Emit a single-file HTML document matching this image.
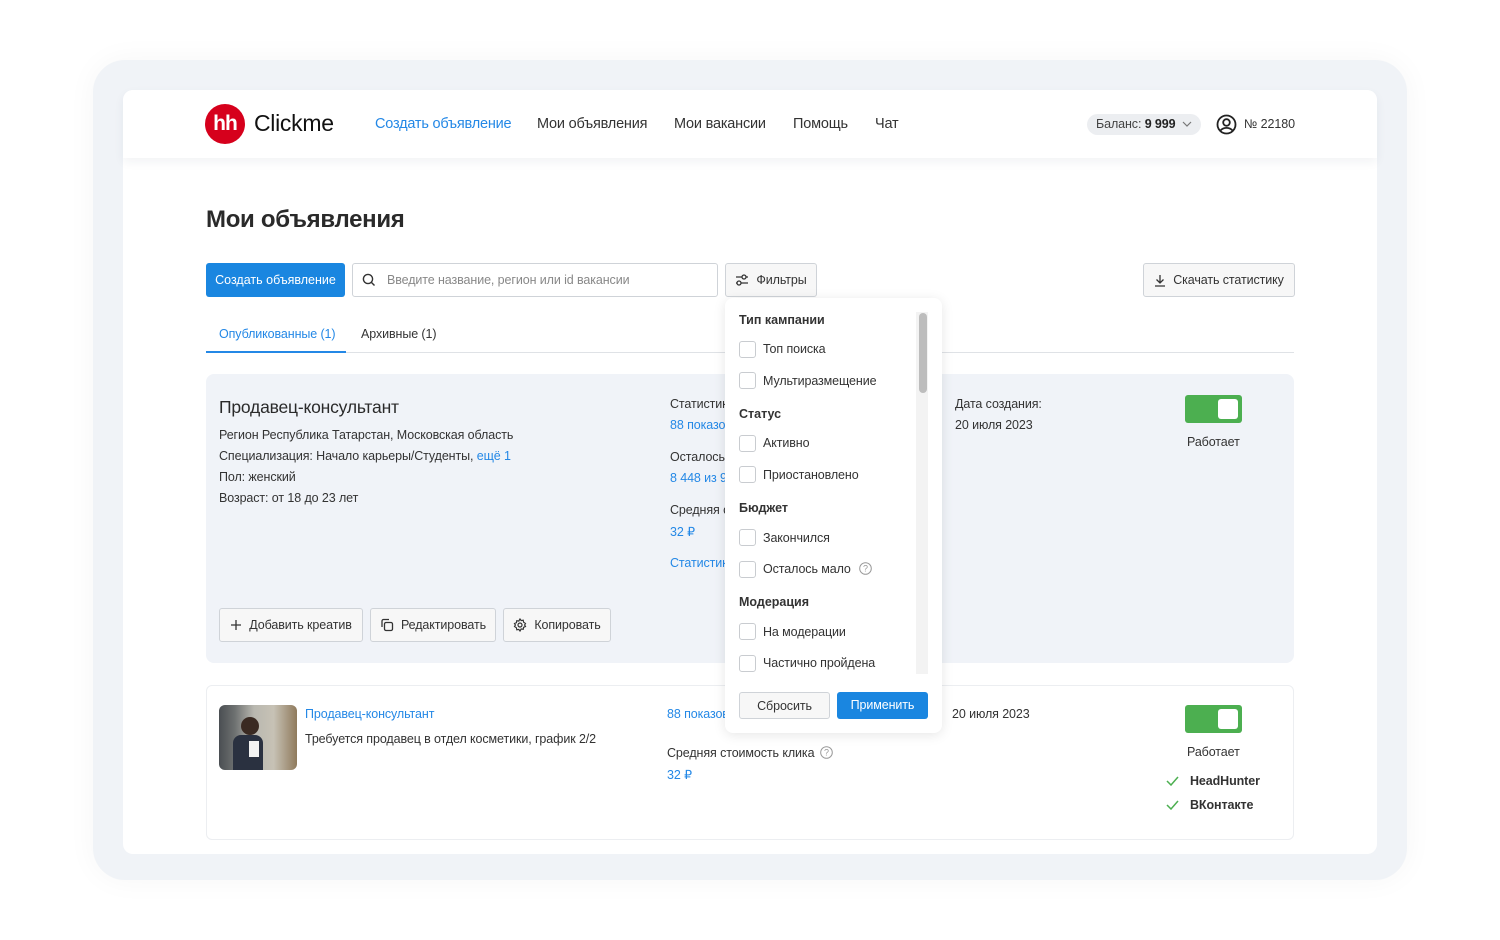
<!DOCTYPE html>
<html><head><meta charset="utf-8"><style>
*{box-sizing:border-box;margin:0;padding:0}
body{width:1500px;height:940px;background:#fff;font-family:"Liberation Sans",Arial,sans-serif;color:#333;position:relative;overflow:hidden}
.a{position:absolute;white-space:nowrap}
.frame{left:93px;top:60px;width:1314px;height:820px;background:#f0f3f7;border-radius:32px;box-shadow:0 0 30px rgba(0,0,0,0.04)}
.inner{left:123px;top:90px;width:1254px;height:764px;background:#fff;border-radius:10px;overflow:hidden}
.hdr{left:123px;top:90px;width:1254px;height:68px;background:#fff;border-radius:10px 10px 0 0;box-shadow:0 4px 10px rgba(30,50,90,0.06)}
.nav{font-size:14.5px;top:116px;letter-spacing:-0.2px}
.blue{color:#2488e6}
.btn{border:1px solid #cfd3d8;border-radius:3px;background:#f7f7f7;font-size:12.5px;display:flex;align-items:center;justify-content:center;gap:7px;letter-spacing:-0.1px}
.t13{font-size:12.5px;letter-spacing:-0.1px}
.cb{position:absolute;left:739px;width:17px;height:17px;border:1px solid #c9ccd0;border-radius:3px;background:#fff}
.lb{position:absolute;left:763px;font-size:12.5px;letter-spacing:-0.1px}
.hd{position:absolute;left:739px;font-size:12.5px;font-weight:bold}
.tg{width:57px;height:28px;background:#4caf50;border-radius:3px}
.tg:after{content:"";position:absolute;right:4px;top:4px;width:20px;height:20px;background:#fff;border-radius:3px}
</style></head><body>
<div class="a frame"></div>
<div class="a inner"></div>
<div class="a hdr"></div>
<div class="a" style="left:205px;top:104px;width:40px;height:40px;border-radius:50%;background:#d6001c;color:#fff;font-weight:bold;font-size:21px;text-align:center;line-height:40px;letter-spacing:-1px">hh</div>
<div class="a" style="left:254px;top:110px;font-size:23px;color:#111;letter-spacing:-0.3px">Clickme</div>
<div class="a nav blue" style="left:375px">Создать объявление</div>
<div class="a nav" style="left:537px">Мои объявления</div>
<div class="a nav" style="left:674px">Мои вакансии</div>
<div class="a nav" style="left:793px">Помощь</div>
<div class="a nav" style="left:875px">Чат</div>
<div class="a t13" style="left:1087px;top:114px;width:114px;height:21px;background:#eceef1;border-radius:11px;padding:3px 0 0 9px;color:#444">Баланс: <b style="color:#222">9 999</b> <svg width="10" height="8" viewBox="0 0 10 8" style="margin-left:3px"><path d="M1 2l4 4 4-4" fill="none" stroke="#777" stroke-width="1.2"/></svg></div>
<svg class="a" style="left:1216px;top:114px" width="21" height="21" viewBox="0 0 21 21"><circle cx="10.5" cy="10.5" r="9" fill="none" stroke="#222" stroke-width="1.8"/><circle cx="10.5" cy="8.5" r="3.3" fill="none" stroke="#222" stroke-width="1.8"/><path d="M4.5 16.5c3-3.5 9-3.5 12 0" fill="none" stroke="#222" stroke-width="1.8"/></svg>
<div class="a t13" style="left:1244px;top:117px">№ 22180</div>
<div class="a" style="left:206px;top:206px;font-size:24px;font-weight:bold;color:#2a2a2a;letter-spacing:-0.3px">Мои объявления</div>
<div class="a" style="left:206px;top:263px;width:139px;height:34px;background:#1a86e0;border-radius:3px;color:#fff;font-size:12.5px;text-align:center;line-height:34px">Создать объявление</div>
<div class="a t13" style="left:352px;top:263px;width:366px;height:34px;border:1px solid #cfd3d8;border-radius:3px;padding:9px 0 0 34px;color:#888">Введите название, регион или id вакансии</div>
<svg class="a" style="left:362px;top:273px" width="14" height="14" viewBox="0 0 14 14"><circle cx="6" cy="6" r="4.6" fill="none" stroke="#333" stroke-width="1.4"/><path d="M9.5 9.5l3 3" stroke="#333" stroke-width="1.4"/></svg>
<div class="a btn" style="left:725px;top:263px;width:92px;height:34px"><svg width="14" height="12" viewBox="0 0 14 12"><path d="M1 3h12M1 9h12" stroke="#333" stroke-width="1.3"/><circle cx="9" cy="3" r="2" fill="#f7f7f7" stroke="#333" stroke-width="1.3"/><circle cx="4" cy="9" r="2" fill="#f7f7f7" stroke="#333" stroke-width="1.3"/></svg>Фильтры</div>
<div class="a btn" style="left:1143px;top:263px;width:152px;height:34px"><svg width="12" height="13" viewBox="0 0 12 13"><path d="M6 1v8M2.5 5.5L6 9l3.5-3.5M1 12h10" fill="none" stroke="#333" stroke-width="1.3"/></svg>Скачать статистику</div>
<div class="a t13 blue" style="left:219px;top:327px">Опубликованные (1)</div>
<div class="a t13" style="left:361px;top:327px">Архивные (1)</div>
<div class="a" style="left:206px;top:352px;width:1088px;height:1px;background:#dfe2e6"></div>
<div class="a" style="left:206px;top:351px;width:140px;height:2px;background:#2488e6"></div>

<div class="a" style="left:206px;top:374px;width:1088px;height:289px;background:#f0f3f8;border-radius:8px"></div>
<div class="a" style="left:219px;top:397px;font-size:17.5px;color:#2a2a2a;letter-spacing:-0.2px">Продавец-консультант</div>
<div class="a t13" style="left:219px;top:428px">Регион Республика Татарстан, Московская область</div>
<div class="a t13" style="left:219px;top:449px">Специализация: Начало карьеры/Студенты, <span class="blue">ещё 1</span></div>
<div class="a t13" style="left:219px;top:470px">Пол: женский</div>
<div class="a t13" style="left:219px;top:491px">Возраст: от 18 до 23 лет</div>
<div class="a t13" style="left:670px;top:397px">Статистика</div>
<div class="a t13 blue" style="left:670px;top:418px">88 показов</div>
<div class="a t13" style="left:670px;top:450px">Осталось</div>
<div class="a t13 blue" style="left:670px;top:471px">8 448 из 9</div>
<div class="a t13" style="left:670px;top:503px">Средняя с</div>
<div class="a t13 blue" style="left:670px;top:524px">32 ₽</div>
<div class="a t13 blue" style="left:670px;top:556px">Статистика</div>
<div class="a t13" style="left:955px;top:397px">Дата создания:</div>
<div class="a t13" style="left:955px;top:418px">20 июля 2023</div>
<div class="a tg" style="left:1185px;top:395px"></div>
<div class="a t13" style="left:1187px;top:435px">Работает</div>
<div class="a btn" style="left:219px;top:608px;width:144px;height:34px"><svg width="12" height="12"><path d="M6 1v10M1 6h10" stroke="#333" stroke-width="1.3"/></svg>Добавить креатив</div>
<div class="a btn" style="left:370px;top:608px;width:126px;height:34px"><svg width="14" height="14" viewBox="0 0 14 14"><rect x="4.5" y="4.5" width="8" height="8" rx="1.5" fill="none" stroke="#333" stroke-width="1.3"/><path d="M2 9V3a1.5 1.5 0 011.5-1.5H9" fill="none" stroke="#333" stroke-width="1.3"/></svg>Редактировать</div>
<div class="a btn" style="left:503px;top:608px;width:108px;height:34px"><svg width="14" height="14" viewBox="0 0 14 14"><circle cx="7" cy="7" r="2" fill="none" stroke="#333" stroke-width="1.2"/><path d="M7 1l1.2 1.6 2-.4.4 2L12.5 5.5 11.6 7l.9 1.5-1.9.8-.4 2-2-.4L7 13l-1.2-1.6-2 .4-.4-2L1.5 8.5 2.4 7l-.9-1.5 1.9-.8.4-2 2 .4z" fill="none" stroke="#333" stroke-width="1.2"/></svg>Копировать</div>

<div class="a" style="left:206px;top:685px;width:1088px;height:155px;border:1px solid #eceef1;border-radius:6px;background:#fff"></div>
<div class="a" style="left:219px;top:705px;width:78px;height:65px;border-radius:6px;background:linear-gradient(90deg,#4a4e52 0%,#6d7070 20%,#b9b8b0 45%,#c7c2b5 70%,#8f7a5c 100%);overflow:hidden"><div style="position:absolute;left:22px;top:12px;width:18px;height:18px;border-radius:50%;background:#3a2a22"></div><div style="position:absolute;left:14px;top:30px;width:30px;height:40px;border-radius:8px 8px 0 0;background:#2a3140"></div><div style="position:absolute;left:30px;top:36px;width:10px;height:16px;background:#f2f2f2"></div></div>
<div class="a t13 blue" style="left:305px;top:707px">Продавец-консультант</div>
<div class="a t13" style="left:305px;top:732px">Требуется продавец в отдел косметики, график 2/2</div>
<div class="a t13 blue" style="left:667px;top:707px">88 показов</div>
<div class="a t13" style="left:667px;top:746px">Средняя стоимость клика <svg width="13" height="13" viewBox="0 0 13 13" style="vertical-align:-2px;margin-left:2px"><circle cx="6.5" cy="6.5" r="5.8" fill="none" stroke="#999"/><text x="6.5" y="9.5" font-size="9" text-anchor="middle" fill="#999" font-family="Liberation Sans">?</text></svg></div>
<div class="a t13 blue" style="left:667px;top:767px">32 ₽</div>
<div class="a t13" style="left:952px;top:707px">20 июля 2023</div>
<div class="a tg" style="left:1185px;top:705px"></div>
<div class="a t13" style="left:1187px;top:745px">Работает</div>
<svg class="a" style="left:1166px;top:776px" width="13" height="10"><path d="M1 5l4 4 7-8" fill="none" stroke="#4caf50" stroke-width="1.5"/></svg>
<div class="a t13" style="left:1190px;top:774px;font-weight:bold">HeadHunter</div>
<svg class="a" style="left:1166px;top:800px" width="13" height="10"><path d="M1 5l4 4 7-8" fill="none" stroke="#4caf50" stroke-width="1.5"/></svg>
<div class="a t13" style="left:1190px;top:798px;font-weight:bold">ВКонтакте</div>

<div class="a" style="left:725px;top:298px;width:217px;height:435px;background:#fff;border-radius:8px;box-shadow:0 2px 12px rgba(0,0,0,0.1)"></div>
<div class="a" style="left:916px;top:312px;width:12px;height:362px;background:#f3f3f3"></div>
<div class="a" style="left:919px;top:313px;width:8px;height:80px;background:#bdbdbd;border-radius:4px"></div>
<div class="hd" style="top:313px">Тип кампании</div>
<div class="cb" style="top:341px"></div><div class="lb" style="top:342px">Топ поиска</div>
<div class="cb" style="top:372px"></div><div class="lb" style="top:374px">Мультиразмещение</div>
<div class="hd" style="top:407px">Статус</div>
<div class="cb" style="top:435px"></div><div class="lb" style="top:436px">Активно</div>
<div class="cb" style="top:466px"></div><div class="lb" style="top:468px">Приостановлено</div>
<div class="hd" style="top:501px">Бюджет</div>
<div class="cb" style="top:529px"></div><div class="lb" style="top:531px">Закончился</div>
<div class="cb" style="top:561px"></div><div class="lb" style="top:562px">Осталось мало <svg width="13" height="13" viewBox="0 0 13 13" style="vertical-align:-2px;margin-left:5px"><circle cx="6.5" cy="6.5" r="5.8" fill="none" stroke="#999"/><text x="6.5" y="9.5" font-size="9" text-anchor="middle" fill="#999" font-family="Liberation Sans">?</text></svg></div>
<div class="hd" style="top:595px">Модерация</div>
<div class="cb" style="top:623px"></div><div class="lb" style="top:625px">На модерации</div>
<div class="cb" style="top:655px"></div><div class="lb" style="top:656px">Частично пройдена</div>
<div class="a btn" style="left:739px;top:692px;width:91px;height:27px">Сбросить</div>
<div class="a t13" style="left:837px;top:692px;width:91px;height:27px;background:#1a86e0;color:#fff;border-radius:3px;text-align:center;line-height:27px">Применить</div>
</body></html>
